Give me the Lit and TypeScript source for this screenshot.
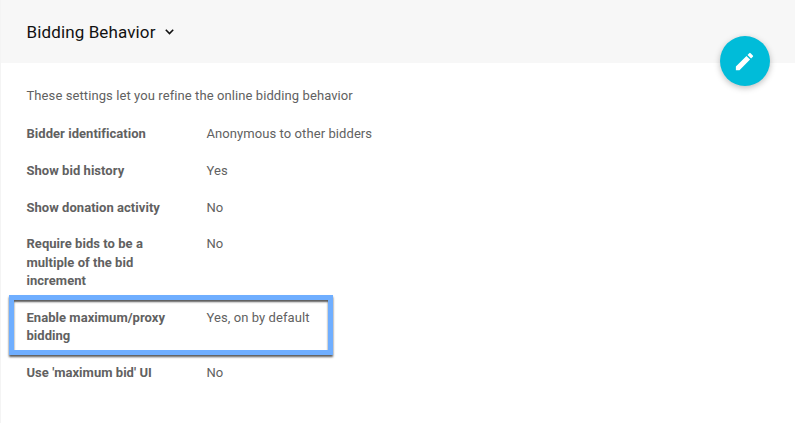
import { LitElement, html, css } from "lit";
import { customElement } from "lit/decorators.js";

const rows = [
  { label: "Bidder identification", value: "Anonymous to other bidders" },
  { label: "Show bid history", value: "Yes" },
  { label: "Show donation activity", value: "No" },
  { label: "Require bids to be a multiple of the bid increment", value: "No" },
  { label: "Enable maximum/proxy bidding", value: "Yes, on by default", focus: true },
  { label: "Use 'maximum bid' UI", value: "No" },
];

@customElement("app-root")
export class AppRoot extends LitElement {
  static styles = css`
    :host { display: block; position: relative; box-sizing: border-box; height: 423px; overflow: hidden; background: #fff; border-left: 1px solid #f4f4f4; font-family: Roboto, sans-serif; font-size: 13px; letter-spacing: 0.08px; color: #616161; }
    .head { height: 63px; background: #f7f7f7; display: flex; align-items: center; padding-left: 25.5px; gap: 9px; color: #111; }
    h1 { margin: 0; font-size: 17px; font-weight: 400; letter-spacing: 0.12px; line-height: 24px; }
    .chev { width: 9px; height: 6px; }
    .body { padding: 23px 26px 0 25.5px; }
    p { margin: 0 0 20px; line-height: 19px; letter-spacing: 0.09px; }
    dl { margin: 0; }
    .row { position: relative; display: grid; grid-template-columns: 150px 1fr; column-gap: 30px; line-height: 18.4px; margin-bottom: 18.4px; }
    dt { font-weight: 700; letter-spacing: 0.04px; }
    dd { margin: 0; }
    .ring { position: absolute; left: -17.5px; top: -14px; width: 324px; height: 60px; box-sizing: border-box; border: 5px solid #6faeff; box-shadow: 0 2px 2px rgba(0,0,0,.65), inset 0 2px 2px rgba(0,0,0,.65); }
    .fab { position: absolute; left: 719px; top: 36px; width: 50px; height: 50px; border: 0; padding: 0 1px 0 0; box-sizing: border-box; border-radius: 50%; background: #00bcd9; display: grid; place-items: center; box-shadow: 0 2px 6px rgba(0,0,0,.26); }
    .fab svg { width: 23px; height: 23px; fill: #fff; }
  `;

  render() {
    return html`
      <header class="head"><h1>Bidding Behavior</h1>
        <svg class="chev" viewBox="0 0 9 6"><path d="M.8.8 4.5 4.5 8.2.8" fill="none" stroke="#111" stroke-width="1.6"/></svg>
      </header>
      <main class="body">
        <p>These settings let you refine the online bidding behavior</p>
        <dl>${rows.map((r) => html`<div class="row"><dt>${r.label}</dt><dd>${r.value}</dd>${r.focus ? html`<span class="ring"></span>` : ""}</div>`)}</dl>
      </main>
      <button class="fab" aria-label="Edit"><svg viewBox="0 0 24 24"><path d="M3 17.25V21h3.75L17.81 9.94l-3.75-3.75L3 17.25zM20.71 7.04a1 1 0 0 0 0-1.41l-2.34-2.34a1 1 0 0 0-1.41 0l-1.83 1.83 3.75 3.75 1.83-1.83z"/></svg></button>
    `;
  }
}
